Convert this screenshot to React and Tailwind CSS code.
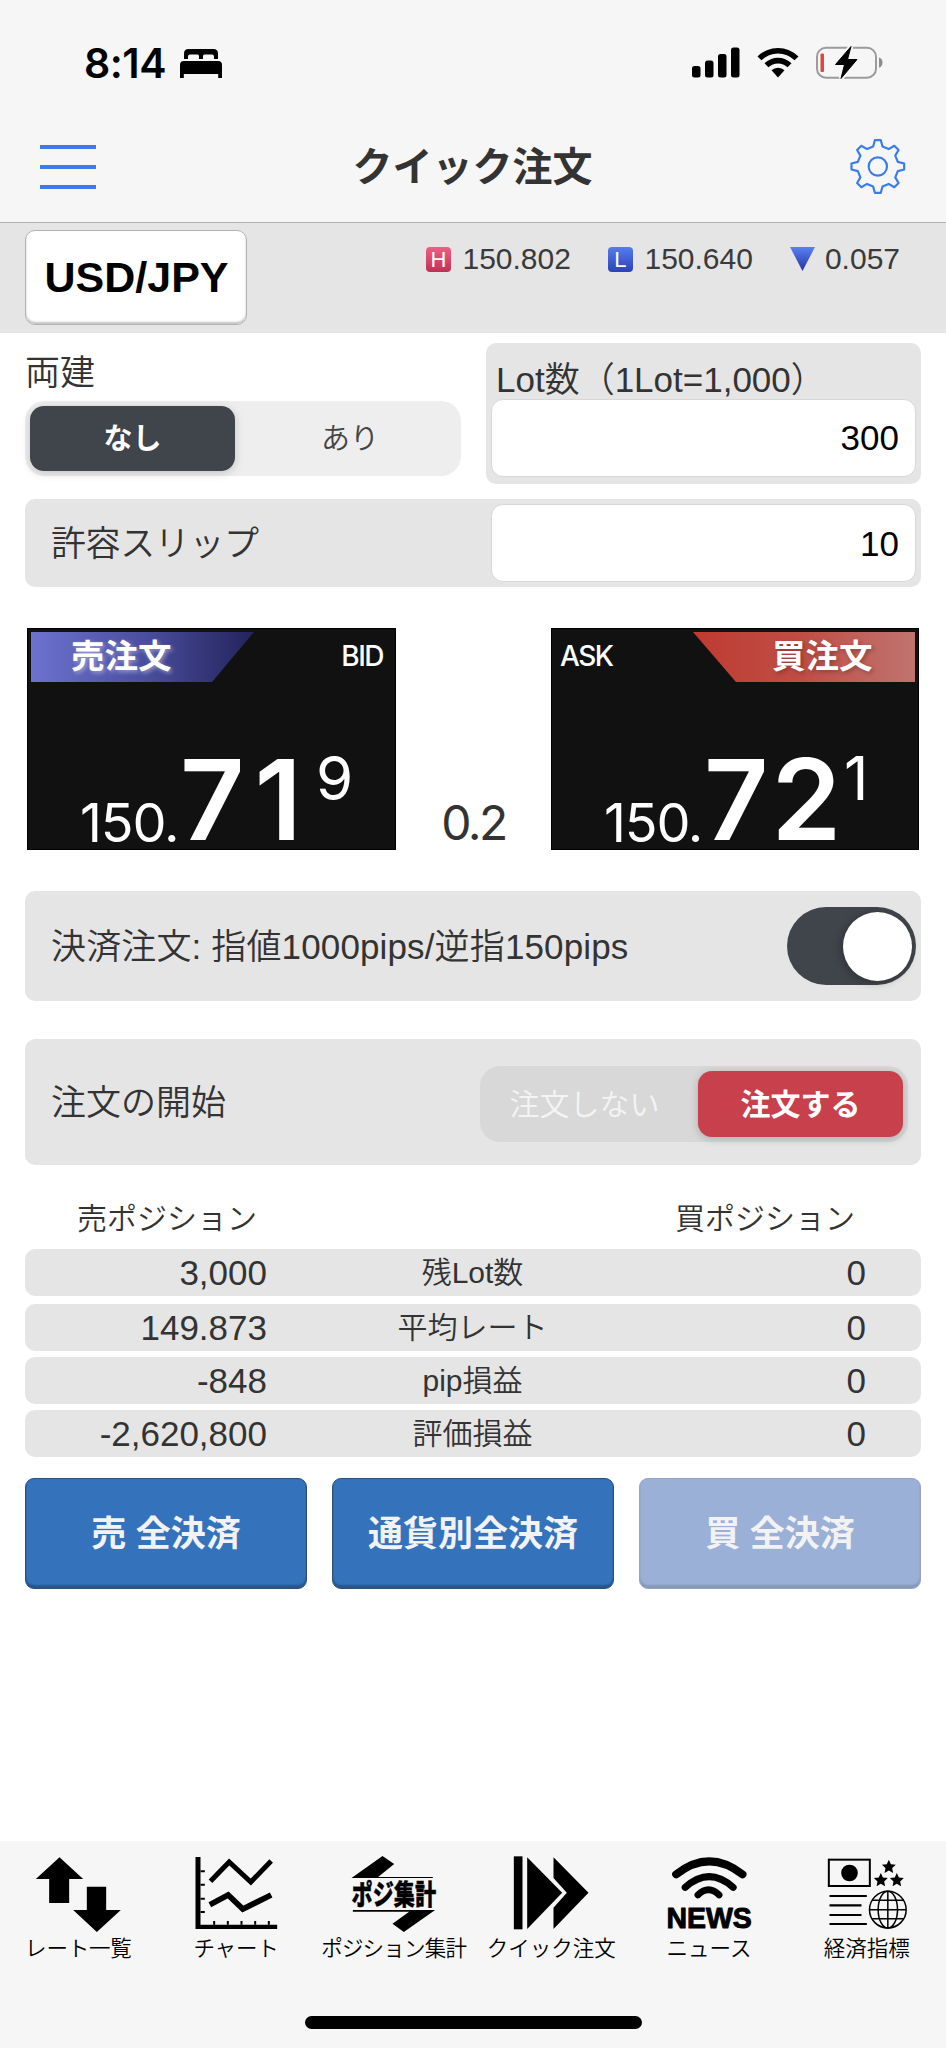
import { useState } from 'react';

const POSITION_ROWS = [
  { label: '残Lot数', sell: '3,000', buy: '0', gap: 'mb-2' },
  { label: '平均レート', sell: '149.873', buy: '0', gap: 'mb-[6px]' },
  { label: 'pip損益', sell: '-848', buy: '0', gap: 'mb-[6px]' },
  { label: '評価損益', sell: '-2,620,800', buy: '0', gap: '' },
];

// 歯車の輪郭（歯は8枚）
const gearPoints = () => {
  const tooth = [[-14, -60], [-9, -79], [9, -79], [14, -60]];
  const points = [];
  for (let i = 0; i < 8; i++) {
    const a = (i * Math.PI) / 4;
    tooth.forEach(([x, y]) => {
      points.push(`${(x * Math.cos(a) - y * Math.sin(a)).toFixed(1)},${(x * Math.sin(a) + y * Math.cos(a)).toFixed(1)}`);
    });
  }
  return points.join(' ');
};

function StatusBar() {
  return (
    <div className="h-[112px] pt-[46px] pl-[84px] pr-[63px] flex justify-between items-start">
      <div className="flex items-start">
        <span className="w-[96px] font-['Inter'] font-semibold text-[41px] leading-[34px] tracking-[-0.5px] text-black">8:14</span>
        <svg className="w-[42px] h-[29px] mt-[3px]" viewBox="0 0 42 29">
          <path d="M4 10V4.5Q4 0 8.500 0H33.500Q38 0 38 4.500V10H34V7.500Q34 5.500 32 5.500H24.500Q23 5.500 23 7V10H19V7Q19 5.500 17.500 5.500H10Q8 5.500 8 7.500V10Z" />
          <path d="M0 29V16Q0 12 4 12H38Q42 12 42 16V29H38.200V25H3.800V29Z" />
        </svg>
      </div>
      <div className="flex items-start">
        <svg className="w-[48px] h-[31px] mt-[1px]" viewBox="0 0 48 31">
          <rect x="0" y="19" width="8.500" height="11.500" rx="2.500" />
          <rect x="13" y="13.500" width="8.500" height="17" rx="2.500" />
          <rect x="26" y="7" width="8.500" height="23.500" rx="2.500" />
          <rect x="39" y="0.500" width="8.500" height="30" rx="2.500" />
        </svg>
        <svg className="w-[42px] h-[31px] ml-[17px] mt-[1px]" viewBox="0 0 42 31">
          <path d="M0.500 9.500A29 29 0 0 1 41.500 9.500L37.500 13.300A23.500 23.500 0 0 0 4.500 13.300Z" />
          <path d="M7.500 16.300A19.500 19.500 0 0 1 34.500 16.300L30.600 20.200A14 14 0 0 0 11.400 20.200Z" />
          <path d="M14.500 23.200A9.500 9.500 0 0 1 27.500 23.200L21 30.500Z" />
        </svg>
        <svg className="w-[68px] h-[35px] ml-[16px] -mt-[1px]" viewBox="0 0 68 35">
          <rect x="2" y="2.700" width="59" height="30" rx="9" fill="none" stroke="#9b9b9b" strokeWidth="2" />
          <path d="M64 12.500Q67.500 13.500 67.500 17.600T64 22.700Z" fill="#8c8c8c" />
          <rect x="5.500" y="8.500" width="3.500" height="18.500" rx="1" fill="#e0453f" />
          <path d="M36 1.500L20.500 19.500H29.500L26 33.500L42 14.500H32.500Z" stroke="#f6f6f6" strokeWidth="4.500" />
          <path d="M36 1.500L20.500 19.500H29.500L26 33.500L42 14.500H32.500Z" stroke="black" strokeWidth="1" strokeLinejoin="round" />
        </svg>
      </div>
    </div>
  );
}

function NavBar() {
  return (
    <div className="h-[111px] px-[40px] flex justify-between items-start border-b border-[#b0b0b0]">
      <button className="mt-[33px] w-[56px] flex flex-col gap-4">
        <span className="h-[4px] w-full bg-[#3b7bea]" />
        <span className="h-[4px] w-full bg-[#3b7bea]" />
        <span className="h-[4px] w-full bg-[#3b7bea]" />
      </button>
      <h1 className="mt-[35px] text-[40px] leading-[40px] font-bold text-[#333]">クイック注文</h1>
      <button className="mt-[26px]">
        <svg className="w-[57px] h-[57px]" viewBox="-86.500 -85.500 171 171" fill="none" stroke="#3b7bea" strokeWidth="6.500" strokeLinejoin="round">
          <polygon points={gearPoints()} />
          <circle r="27.500" />
        </svg>
      </button>
    </div>
  );
}

function RateHeader() {
  return (
    <div className="h-[110px] pt-[7px] pl-[25px] pr-[46px] flex justify-between items-start bg-[#e5e5e5]">
      <button className="w-[222px] h-[95px] pl-[1px] rounded-[10px] border border-[#b3b3b3] bg-white shadow-[inset_0_-2px_2px_#c4c4c4] text-[43px] leading-none font-bold text-black text-center">
        USD/JPY
      </button>
      <div className="flex items-center h-[40px] mt-[9px] text-[30px] leading-none text-[#3a3a3a]">
        <span className="w-[25px] h-[25px] rounded-[4px] bg-linear-to-b from-[#ee5f86] to-[#c03052] text-white text-[22px] leading-[26px] text-center">H</span>
        <span className="w-[109px] ml-[11px] text-right">150.802</span>
        <span className="ml-[37px] w-[25px] h-[25px] rounded-[4px] bg-linear-to-b from-[#567cf0] to-[#2d42b4] text-white text-[22px] leading-[26px] text-center">L</span>
        <span className="w-[109px] ml-[11px] text-right">150.640</span>
        <svg className="w-[25px] h-[24px] ml-[37px]" viewBox="0 0 25 24">
          <defs>
            <linearGradient id="down" x1="0" y1="0" x2="0" y2="1">
              <stop offset="0" stopColor="#5a80f4" />
              <stop offset="1" stopColor="#2434a4" />
            </linearGradient>
          </defs>
          <path d="M0 0H25L12.500 24Z" fill="url(#down)" />
        </svg>
        <span className="ml-[10px]">0.057</span>
      </div>
    </div>
  );
}

function OrderSettings({ hedge, setHedge }) {
  return (
    <div className="px-[25px]">
      <div className="flex justify-between pt-[10px]">
        <div className="w-[436px]">
          <p className="h-[58px] pt-[12px] text-[35px] leading-[35px] text-[#333]">両建</p>
          <div className="h-[75px] p-[5px] flex justify-between rounded-[20px] bg-[#eee] text-[29px]">
            <button
              onClick={() => setHedge(false)}
              className={`w-[205px] h-[65px] pt-[2px] rounded-[14px] ${
                hedge ? 'text-[#444]' : 'bg-[#40444b] text-white font-bold shadow-[0_2px_10px_#0000002e]'
              }`}
            >
              なし
            </button>
            <button
              onClick={() => setHedge(true)}
              className={`w-[212px] h-[65px] pt-[2px] rounded-[14px] ${hedge ? 'bg-[#40444b] text-white font-bold' : 'text-[#444]'}`}
            >
              あり
            </button>
          </div>
        </div>
        <div className="w-[435px] h-[141px] px-[5px] rounded-[10px] bg-[#e5e5e5]">
          <p className="h-[56px] pt-[18px] pl-[5px] text-[35px] leading-[38px] text-[#333] whitespace-nowrap">Lot数（1Lot=1,000）</p>
          <div className="h-[78px] px-[16px] flex items-center justify-end rounded-[12px] border border-[#d8d8d8] bg-white text-[35px] text-black">
            300
          </div>
        </div>
      </div>
      <div className="mt-[15px] h-[88px] pl-[26px] pr-[5px] flex items-center justify-between rounded-[10px] bg-[#e5e5e5]">
        <span className="text-[35px] leading-none text-[#333] tracking-[-0.4px]">許容スリップ</span>
        <div className="w-[425px] h-[78px] px-[16px] pt-[2px] flex items-center justify-end rounded-[12px] border border-[#d8d8d8] bg-white text-[35px] text-black">
          10
        </div>
      </div>
    </div>
  );
}

function Price({ head, main, mainClass, tail, tailClass }) {
  return (
    <div className="flex items-start font-['Inter'] text-white whitespace-nowrap">
      <span className="w-[100px] mt-[45px] text-[54px] leading-[40px] font-normal tracking-[-1.2px]">{head}</span>
      <span className={`w-[136px] text-[112px] leading-[82px] font-semibold ${mainClass}`}>{main}</span>
      <span className={`text-[60px] leading-[44px] -mt-[2px] font-normal ${tailClass}`}>{tail}</span>
    </div>
  );
}

function PricePanel() {
  return (
    <div className="mt-[41px] pl-[27px] pr-[27px] flex justify-between">
      <button className="w-[369px] h-[222px] p-[3px] flex flex-col bg-[#111] border border-black text-left">
        <div className="w-full flex justify-between">
          <span className="w-[223px] h-[50px] pl-[40px] [clip-path:polygon(0_0,100%_0,181px_100%,0_100%)] bg-linear-to-r from-[#6c72cf] via-[#4c4f9f] to-[#23235c] text-white text-[33.500px] leading-[50px] font-bold [text-shadow:2px_2px_4px_#ffffff66]">
            売注文
          </span>
          <span className="pr-[9px] font-['Inter'] font-medium text-[28px] leading-[49px] tracking-[-1.5px] text-white">BID</span>
        </div>
        <div className="pl-[49px] mt-[76px]">
          <Price head="150." main="71" mainClass="tracking-[10px]" tail="9" tailClass="ml-0" />
        </div>
      </button>
      <div className="pt-[177px] font-['Inter'] font-normal text-[48px] leading-[35px] text-[#333] tracking-[-2.5px]">0.2</div>
      <button className="w-[368px] h-[222px] p-[3px] flex flex-col bg-[#111] border border-black text-left">
        <div className="w-full flex justify-between">
          <span className="pl-[5px] font-['Inter'] font-medium text-[28px] leading-[49px] tracking-[-1.5px] text-white">ASK</span>
          <span className="w-[222px] h-[50px] pl-[79px] [clip-path:polygon(0_0,100%_0,100%_100%,43px_100%)] bg-linear-to-r from-[#bf3a30] via-[#bf4e46] to-[#c0736f] text-white text-[33.500px] leading-[50px] font-bold [text-shadow:2px_2px_4px_#00000040]">
            買注文
          </span>
        </div>
        <div className="pl-[49px] mt-[76px]">
          <Price head="150." main="72" mainClass="tracking-[3px]" tail="1" tailClass="ml-[4px]" />
        </div>
      </button>
    </div>
  );
}

function AutoOrder({ settle, setSettle, active, setActive }) {
  return (
    <div className="px-[25px]">
      <div className="mt-[41px] h-[110px] pl-[26px] pr-[5px] flex items-center justify-between rounded-[10px] bg-[#e5e5e5]">
        <span className="text-[35px] leading-none text-[#333] tracking-[0.14px]">決済注文: 指値1000pips/逆指150pips</span>
        <button
          onClick={() => setSettle(!settle)}
          className={`w-[129px] h-[78px] p-[4px] flex items-center rounded-full ${settle ? 'justify-end bg-[#40444b]' : 'bg-gray-300'}`}
        >
          <span className="w-[69px] h-[69px] rounded-full bg-white shadow-[-2px_2px_8px_#00000040]" />
        </button>
      </div>
      <div className="mt-[38px] h-[126px] pl-[26px] pr-[13px] flex items-center justify-between rounded-[10px] bg-[#e5e5e5]">
        <span className="text-[35px] leading-none text-[#333]">注文の開始</span>
        <div className="w-[428px] h-[76px] mt-[3px] p-[5px] flex justify-between rounded-[20px] bg-[#d8d8d8] text-[30px]">
          <button onClick={() => setActive(false)} className="w-[199px] pt-[2px] text-[#f4f4f4]">
            注文しない
          </button>
          <button
            onClick={() => setActive(true)}
            className={`w-[205px] h-[66px] pt-[2px] rounded-[14px] text-white font-bold ${
              active ? 'bg-[#c8404b] shadow-[0_2px_8px_#00000033]' : ''
            }`}
          >
            注文する
          </button>
        </div>
      </div>
    </div>
  );
}

function Positions() {
  return (
    <div className="px-[25px]">
      <div className="h-[84px] pt-[38px] pl-[52px] pr-[66px] flex justify-between text-[30px] leading-[32px] text-[#333]">
        <span>売ポジション</span>
        <span>買ポジション</span>
      </div>
      {POSITION_ROWS.map((row) => (
        <div
          key={row.label}
          className={`h-[47px] pr-[55px] grid grid-cols-[242px_411px_1fr] items-center rounded-[10px] bg-[#e5e5e5] text-[35px] leading-[47px] text-[#333] ${row.gap}`}
        >
          <span className="text-right">{row.sell}</span>
          <span className="text-center text-[30px]">{row.label}</span>
          <span className="text-right">{row.buy}</span>
        </div>
      ))}
      <div className="mt-[21px] grid grid-cols-3 gap-[25px] text-[35px] font-bold text-[#f2f2f2]">
        <button className="h-[111px] pt-[2px] rounded-[9px] bg-[#3473bc] border border-[#2a4f78] shadow-[inset_0_-3px_2px_#2a558a]">売 全決済</button>
        <button className="h-[111px] pt-[2px] rounded-[9px] bg-[#3473bc] border border-[#2a4f78] shadow-[inset_0_-3px_2px_#2a558a]">通貨別全決済</button>
        <button className="h-[111px] pt-[2px] rounded-[9px] bg-[#9ab0d7] border border-[#95a5c0] shadow-[inset_0_-3px_2px_#8598ba]">買 全決済</button>
      </div>
    </div>
  );
}

const star = (cx, cy) => {
  const points = [];
  for (let i = 0; i < 10; i++) {
    const r = i % 2 ? 10.5 : 22;
    const a = (i * Math.PI) / 5;
    points.push(`${(cx + r * Math.sin(a)).toFixed(1)},${(cy - r * Math.cos(a)).toFixed(1)}`);
  }
  return points.join(' ');
};

const TABS = [
  {
    label: 'レート一覧',
    spacing: 'tracking-[-0.2px]',
    viewBox: '101.5 75 270 240',
    icon: (
      <>
        <path d="M178 82L249 147H207V219H147V147H107Z" />
        <path d="M260 170H318V240H362L290 306L219 240H260Z" />
      </>
    ),
  },
  {
    label: 'チャート',
    spacing: 'tracking-[-0.2px]',
    viewBox: '576.5 75 270 240',
    icon: (
      <>
        <path d="M587 81H602V284H832V297H587Z" />
        <path d="M602 124H615M602 164H615M602 206H615M602 246H615M643 284V273M684 284V273M725 284V273M766 284V273M807 284V273" stroke="black" strokeWidth="6" />
        <path d="M632 154L688 96L753 156L814 93" fill="none" stroke="black" strokeWidth="15" />
        <path d="M630 224L685 195L729 237L814 195" fill="none" stroke="black" strokeWidth="17" />
      </>
    ),
  },
  {
    label: 'ポジション集計',
    spacing: 'tracking-[-0.8px]',
    viewBox: '1048.5 75 270 240',
    icon: (
      <>
        <path d="M1149 78L1184 102L1136 141H1300V144H1056Z" />
        <path d="M1307 240L1213 306L1179 281L1229 245H1060V240Z" />
        <text x="1056" y="224" fontSize="86" fontWeight="900" textLength="254" lengthAdjust="spacingAndGlyphs" stroke="black" strokeWidth="1">
          ポジ集計
        </text>
      </>
    ),
  },
  {
    label: 'クイック注文',
    spacing: 'tracking-normal',
    viewBox: '101.5 75 270 240',
    icon: (
      <>
        <path d="M122 79H148V298H122Z" />
        <path d="M162 82L267 188L162 297Z" />
        <path d="M241 82L346 188L241 297V233L281 188L241 144Z" />
      </>
    ),
  },
  {
    label: 'ニュース',
    spacing: 'tracking-normal',
    viewBox: '575.5 75 270 240',
    icon: (
      <>
        <path d="M609 133Q708 55 808 133" fill="none" stroke="black" strokeWidth="24" strokeLinecap="round" />
        <path d="M636 172Q708 108 780 172" fill="none" stroke="black" strokeWidth="21" strokeLinecap="round" />
        <path d="M674 195Q706 164 738 195" fill="none" stroke="black" strokeWidth="20" strokeLinecap="round" />
        <text x="580" y="294" fontSize="88" fontWeight="700" textLength="256" lengthAdjust="spacingAndGlyphs" stroke="black" strokeWidth="3" strokeLinejoin="round">
          NEWS
        </text>
      </>
    ),
  },
  {
    label: '経済指標',
    spacing: 'tracking-normal',
    viewBox: '1048.5 75 270 240',
    icon: (
      <>
        <rect x="1069" y="89" width="123" height="79" fill="none" stroke="black" strokeWidth="6" />
        <circle cx="1131" cy="129" r="25" />
        <polygon points={star(1249, 111)} />
        <polygon points={star(1225, 151)} />
        <polygon points={star(1273, 151)} />
        <path d="M1071 198H1183M1071 226H1167M1071 255H1167M1071 282H1183" stroke="black" strokeWidth="6.500" />
        <g fill="none" stroke="black" strokeWidth="4.500">
          <circle cx="1246" cy="239" r="55" />
          <ellipse cx="1246" cy="239" rx="29" ry="55" />
          <path d="M1246 184V294M1191 239H1301M1199 211H1293M1199 266H1293" />
        </g>
      </>
    ),
  },
];

function TabBar() {
  return (
    <div className="h-[207px] flex flex-col items-center bg-[#f6f6f6]">
      <div className="w-full pt-[14px] flex">
        {TABS.map((tab) => (
          <button key={tab.label} className="flex-1 basis-0 flex flex-col items-center">
            <svg className="w-[90px] h-[80px] overflow-visible" viewBox={tab.viewBox}>
              {tab.icon}
            </svg>
            <span className={`mt-[2px] pr-[1px] text-[21.500px] leading-[24px] font-[350] text-black whitespace-nowrap ${tab.spacing}`}>
              {tab.label}
            </span>
          </button>
        ))}
      </div>
      <div className="mt-[55px] w-[337px] h-[13px] rounded-full bg-black" />
    </div>
  );
}

export default function App() {
  const [hedge, setHedge] = useState(false);
  const [settle, setSettle] = useState(true);
  const [active, setActive] = useState(true);

  return (
    <div className="w-[946px] h-[2048px] flex flex-col overflow-hidden bg-white font-['Liberation_Sans','Noto_Sans_CJK_JP',sans-serif]">
      <div className="bg-[#f6f6f6]">
        <StatusBar />
        <NavBar />
      </div>
      <RateHeader />
      <div className="flex-1 font-[350]">
        <OrderSettings hedge={hedge} setHedge={setHedge} />
        <PricePanel />
        <AutoOrder settle={settle} setSettle={setSettle} active={active} setActive={setActive} />
        <Positions />
      </div>
      <TabBar />
    </div>
  );
}
